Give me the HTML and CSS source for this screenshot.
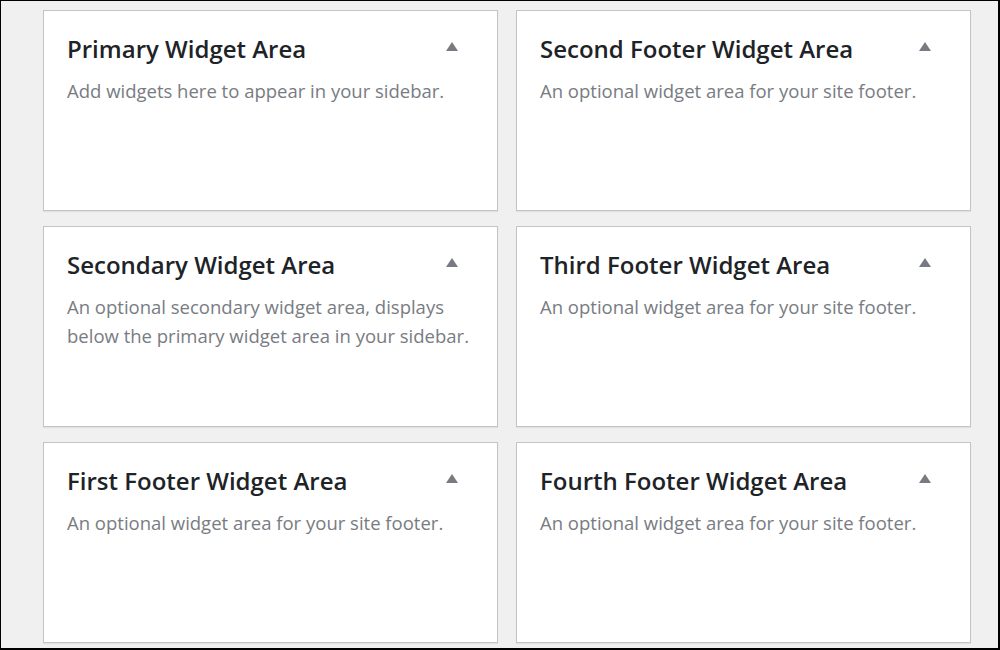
FILE: index.html
```html
<!DOCTYPE html>
<html lang="en">

<head>
    <meta charset="UTF-8">
    <title>Widgets</title>
    <link rel="stylesheet" href="styles.css">
</head>

<body>
    <div class="frame">
        <div class="widget-areas">
            <div class="postbox">
                <div class="postbox-header">
                    <h2>Primary Widget Area</h2>
                    <span class="toggle"><svg width="12" height="9" viewBox="0 0 12 9"><polygon points="6,0 12,9 0,9" /></svg></span>
                </div>
                <p>Add widgets here to appear in your sidebar.</p>
            </div>
            <div class="postbox">
                <div class="postbox-header">
                    <h2>Second Footer Widget Area</h2>
                    <span class="toggle"><svg width="12" height="9" viewBox="0 0 12 9"><polygon points="6,0 12,9 0,9" /></svg></span>
                </div>
                <p>An optional widget area for your site footer.</p>
            </div>
            <div class="postbox">
                <div class="postbox-header">
                    <h2>Secondary Widget Area</h2>
                    <span class="toggle"><svg width="12" height="9" viewBox="0 0 12 9"><polygon points="6,0 12,9 0,9" /></svg></span>
                </div>
                <p>An optional secondary widget area, displays below the primary widget area in your sidebar.</p>
            </div>
            <div class="postbox">
                <div class="postbox-header">
                    <h2>Third Footer Widget Area</h2>
                    <span class="toggle"><svg width="12" height="9" viewBox="0 0 12 9"><polygon points="6,0 12,9 0,9" /></svg></span>
                </div>
                <p>An optional widget area for your site footer.</p>
            </div>
            <div class="postbox">
                <div class="postbox-header">
                    <h2>First Footer Widget Area</h2>
                    <span class="toggle"><svg width="12" height="9" viewBox="0 0 12 9"><polygon points="6,0 12,9 0,9" /></svg></span>
                </div>
                <p>An optional widget area for your site footer.</p>
            </div>
            <div class="postbox">
                <div class="postbox-header">
                    <h2>Fourth Footer Widget Area</h2>
                    <span class="toggle"><svg width="12" height="9" viewBox="0 0 12 9"><polygon points="6,0 12,9 0,9" /></svg></span>
                </div>
                <p>An optional widget area for your site footer.</p>
            </div>
        </div>
    </div>
</body>

</html>
```

FILE: styles.css
```css
* {
    box-sizing: border-box;
}

body {
    margin: 0;
    font-family: 'Open Sans', 'Noto Sans', Arial, sans-serif;
    background-color: #f0f0f1;
}

.frame {
    width: 1000px;
    height: 650px;
    border: 1px solid #000;
    border-right-width: 2px;
    border-bottom-width: 2px;
    padding: 9px 0 0 42px;
    overflow: hidden;
}

.widget-areas {
    display: grid;
    grid-template-columns: 455px 455px;
    grid-auto-rows: 201px;
    column-gap: 18px;
    row-gap: 15px;
}

.postbox {
    background-color: #fff;
    border: 1px solid #c3c4c7;
    box-shadow: 0 1px 1px rgba(0, 0, 0, 0.06);
    padding: 23px 23px 0 23px;
}

.postbox-header {
    display: flex;
    justify-content: space-between;
    align-items: flex-start;
}

.postbox h2 {
    margin: 0;
    font-size: 24px;
    font-weight: 600;
    line-height: 30px;
    color: #1d2327;
}

.toggle {
    padding-top: 8px;
    margin-right: 16px;
    line-height: 0;
}

.toggle svg {
    fill: #787c82;
}

.postbox p {
    margin: 12px -8px 0 0;
    font-size: 18.5px;
    line-height: 29px;
    color: #787c82;
}
```
